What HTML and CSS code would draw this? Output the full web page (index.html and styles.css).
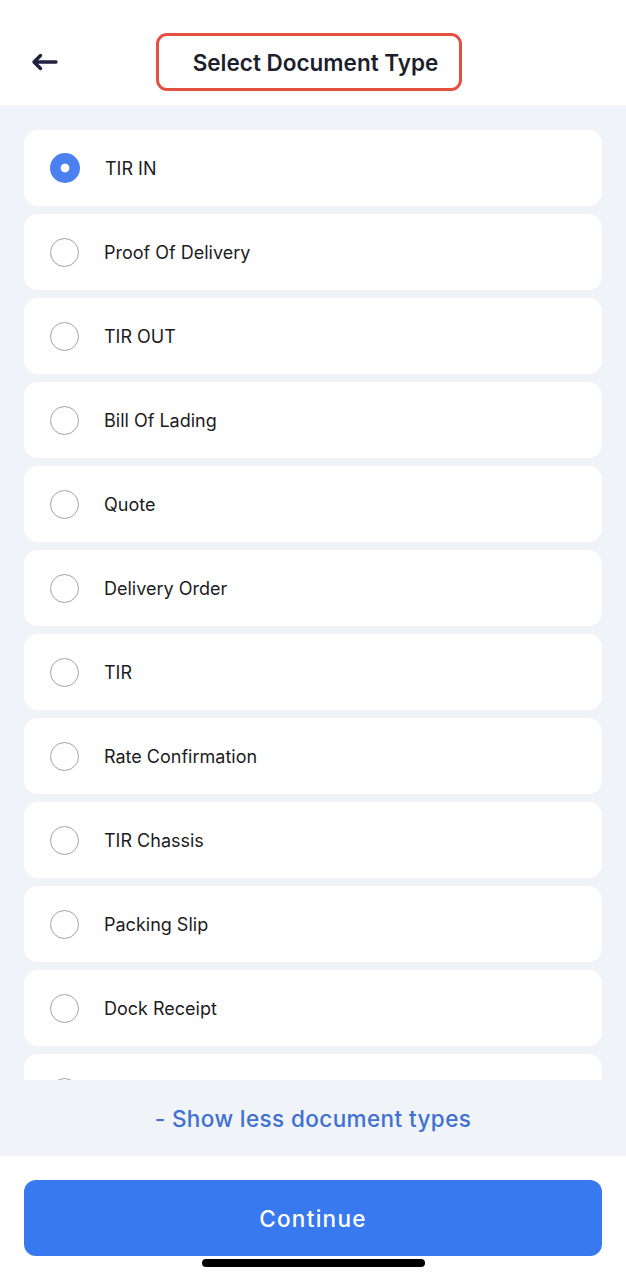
FILE: index.html
```html
<!DOCTYPE html>
<html lang="en">
<head>
    <meta charset="UTF-8">
    <meta name="viewport" content="width=device-width, initial-scale=1.0">
    <title>Select Document Type</title>
    <link rel="stylesheet" href="styles.css">
</head>
<body>
    <div class="screen">
        <header class="top-bar">
            <button class="back-btn" aria-label="Back">
                <svg width="28" height="20" viewBox="0 0 28 20">
                    <path d="M26 10H4M10.5 3.5L4 10L10.5 16.5" fill="none" stroke="#1f2140" stroke-width="3.4" stroke-linecap="round" stroke-linejoin="round"/>
                </svg>
            </button>
            <h1 class="title">Select Document Type</h1>
        </header>

        <main class="doc-area">
            <div class="doc-list">
                <label class="doc-item"><span class="radio checked"></span>TIR IN</label>
                <label class="doc-item"><span class="radio"></span>Proof Of Delivery</label>
                <label class="doc-item"><span class="radio"></span>TIR OUT</label>
                <label class="doc-item"><span class="radio"></span>Bill Of Lading</label>
                <label class="doc-item"><span class="radio"></span>Quote</label>
                <label class="doc-item"><span class="radio"></span>Delivery Order</label>
                <label class="doc-item"><span class="radio"></span>TIR</label>
                <label class="doc-item"><span class="radio"></span>Rate Confirmation</label>
                <label class="doc-item"><span class="radio"></span>TIR Chassis</label>
                <label class="doc-item"><span class="radio"></span>Packing Slip</label>
                <label class="doc-item"><span class="radio"></span>Dock Receipt</label>
                <!-- next item, scrolled out of view -->
                <label class="doc-item"><span class="radio"></span></label>
            </div>
            <div class="show-less">- Show less document types</div>
        </main>

        <footer class="bottom-bar">
            <button class="continue-btn">Continue</button>
            <div class="home-indicator"></div>
        </footer>
    </div>
</body>
</html>
```

FILE: styles.css
```css
body {
    margin: 0;
    padding: 0;
    background-color: #ffffff;
    font-family: Inter, 'Noto Sans', sans-serif;
    color: #1c1c22;
}

.screen {
    width: 626px;
    height: 1280px;
    display: flex;
    flex-direction: column;
    position: relative;
    overflow: hidden;
}

.top-bar {
    height: 105px;
    box-sizing: border-box;
    padding-top: 33px;
    display: flex;
    align-items: flex-start;
    justify-content: center;
    position: relative;
    background-color: #ffffff;
}

.back-btn {
    position: absolute;
    left: 30px;
    top: 52px;
    padding: 0;
    border: none;
    background: none;
    display: flex;
}

.title {
    margin: 0 8px 0 0;
    padding: 0 21px 0 34px;
    height: 52px;
    display: flex;
    align-items: center;
    border: 3px solid #e4503f;
    border-radius: 11px;
    font-size: 22.5px;
    font-weight: 600;
    color: #1e1f2c;
    letter-spacing: 0;
}

.doc-area {
    height: 1051px;
    background-color: #f0f3f8;
    display: flex;
    flex-direction: column;
}

.doc-list {
    height: 950px;
    margin-top: 25px;
    padding: 0 24px;
    display: flex;
    flex-direction: column;
    gap: 8px;
    overflow: hidden;
}

.doc-item {
    flex-shrink: 0;
    height: 76px;
    display: flex;
    align-items: center;
    gap: 25px;
    padding-left: 26px;
    background-color: #ffffff;
    border-radius: 14px;
    font-size: 18px;
    color: #1c1c22;
}

.radio {
    width: 27px;
    height: 27px;
    border: 1.6px solid #a3a3a6;
    border-radius: 50%;
    box-sizing: content-box;
    flex-shrink: 0;
}

.radio.checked {
    width: 30px;
    height: 30px;
    border: none;
    background: radial-gradient(circle, #ffffff 0 4px, #4a80f0 4.8px);
}

.show-less {
    flex: 1;
    display: flex;
    align-items: center;
    justify-content: center;
    font-size: 22.5px;
    font-weight: 500;
    color: #3f70d2;
    letter-spacing: 0.4px;
}

.bottom-bar {
    flex: 1;
    padding: 24px 24px 0;
    background-color: #ffffff;
}

.continue-btn {
    width: 100%;
    height: 76px;
    border: none;
    border-radius: 12px;
    background-color: #3979f0;
    color: #ffffff;
    font-family: Inter, 'Noto Sans', sans-serif;
    font-size: 22.5px;
    font-weight: 500;
    letter-spacing: 1.3px;
}

.home-indicator {
    position: absolute;
    left: 202px;
    bottom: 13px;
    width: 223px;
    height: 8px;
    border-radius: 4px;
    background-color: #000000;
}
```
